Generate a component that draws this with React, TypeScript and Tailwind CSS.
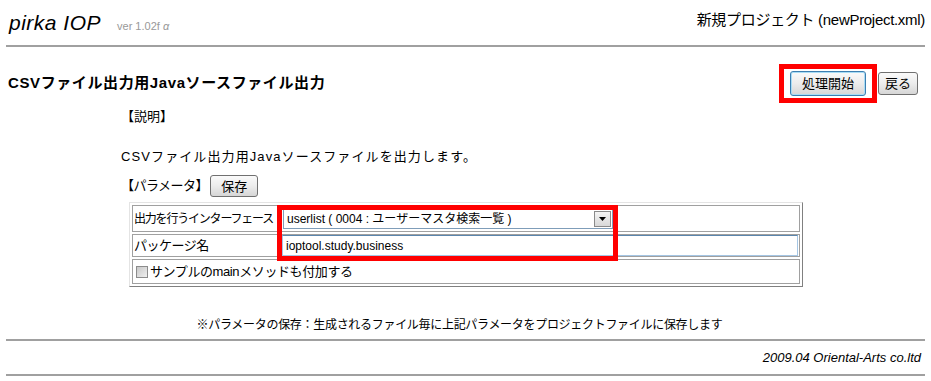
const JP = '"Liberation Sans", "Noto Sans CJK JP", sans-serif';

function XpButton({ children }: { children: React.ReactNode }) {
  return (
    <button className="h-[22px] rounded-[3px] border border-[#707070] px-[10px] text-[13px] leading-none text-black bg-gradient-to-b from-[#fafafa] via-[#ececec] to-[#d6d6d6]">
      {children}
    </button>
  );
}

export default function App() {
  return (
    <div className="w-[931px] h-[381px] bg-white text-black overflow-hidden" style={{ fontFamily: JP }}>
      {/* Header */}
      <header className="mx-[6px] h-[47px] border-b-2 border-[#a0a0a0] flex items-start justify-between">
        <div className="flex items-baseline pl-[3px] pt-[7px]">
          <span className="text-[21px] italic tracking-[0.5px]">pirka IOP</span>
          <span className="ml-[16px] text-[11px] text-[#999]">
            ver 1.02f <span className="italic">α</span>
          </span>
        </div>
        <div className="pt-[9px] text-[15px] tracking-[-0.3px]">新規プロジェクト (newProject.xml)</div>
      </header>

      {/* Title row */}
      <div className="mt-[17px] mx-[8px] flex items-center justify-between">
        <h1 className="text-[15px] font-bold tracking-[0.6px]">CSVファイル出力用Javaソースファイル出力</h1>
        <div className="flex items-center gap-[1px] mr-[5px]">
          <div className="border-[5px] border-[#ff0000] px-[6px] py-[2px]">
            <button className="w-[76px] h-[25px] rounded-[3px] border border-[#3c7fb1] shadow-[inset_0_0_0_1px_#a8dcf5] text-[13px] leading-none bg-gradient-to-b from-[#fafafa] via-[#ececec] to-[#d6d6d6]">
              処理開始
            </button>
          </div>
          <button className="w-[40px] h-[23px] rounded-[3px] border border-[#707070] text-[13px] leading-none bg-gradient-to-b from-[#fafafa] via-[#ececec] to-[#d6d6d6]">
            戻る
          </button>
        </div>
      </div>

      {/* Content */}
      <div className="pl-[121px] mt-[4px] text-[13px]">
        <div className="h-[20px] leading-[20px]">【説明】</div>
        <div className="mt-[20px] h-[20px] leading-[20px] tracking-[1.1px]">CSVファイル出力用Javaソースファイルを出力します。</div>
        <div className="mt-[8px] flex items-center h-[22px]">
          <span className="tracking-[-0.5px]">【パラメータ】</span>
          <span className="ml-[2px]">
            <XpButton>保存</XpButton>
          </span>
        </div>

        {/* Parameter table */}
        <div className="relative ml-[8px] mt-[5px] w-[674px] border border-t-[#e4e4e4] border-l-[#e4e4e4] border-r-[#808080] border-b-[#808080] p-[2px] flex flex-col gap-[2px]">
          <div className="flex gap-[2px] h-[27px]">
            <div className="w-[146px] border border-[#a0a0a0] px-[1px] flex items-center text-[12px] tracking-[-1.2px] whitespace-nowrap">
              出力を行うインターフェース
            </div>
            <div className="flex-1 border border-[#a0a0a0] pl-[2px] flex items-center">
              <div className="w-[330px] h-[20px] border border-[#7f9db9] flex items-center bg-white">
                <span className="flex-1 pl-[3px] text-[12px] whitespace-nowrap">userlist ( 0004 : ユーザーマスタ検索一覧 )</span>
                <span className="w-[17px] h-[16px] mr-[1px] border border-[#8a8a8a] bg-gradient-to-b from-[#f4f4f4] to-[#d8d8d8] flex items-center justify-center">
                  <svg width="7" height="4" viewBox="0 0 7 4">
                    <path d="M0 0h7L3.5 4z" fill="#000" />
                  </svg>
                </span>
              </div>
            </div>
          </div>
          <div className="flex gap-[2px] h-[23px]">
            <div className="w-[146px] border border-[#a0a0a0] px-[1px] flex items-center text-[13px] tracking-[-0.5px]">
              パッケージ名
            </div>
            <div className="flex-1 border border-[#a0a0a0] pl-[1px] pr-[1px] flex items-center">
              <div className="w-full h-[21px] border border-[#a5c6e4] border-t-[#5b86ad] flex items-center pl-[3px] text-[12px]">
                ioptool.study.business
              </div>
            </div>
          </div>
          <div className="h-[25px] border border-[#a0a0a0] flex items-center pl-[3px] text-[13px]">
            <span className="w-[12px] h-[12px] border border-[#8c8c8c] bg-gradient-to-br from-[#c8c8c8] to-[#f0f0f0] mr-[2px]" />
            <span className="tracking-[-0.4px]">サンプルのmainメソッドも付加する</span>
          </div>

          {/* annotation highlight */}
          <div className="absolute left-[147px] top-[2px] w-[341px] h-[56px] border-[5px] border-[#ff0000] pointer-events-none" />
        </div>
      </div>

      {/* Note */}
      <div className="mx-[6px] mt-[29px] text-center text-[12px] tracking-[-0.3px] pr-[12px]">
        ※パラメータの保存：生成されるファイル毎に上記パラメータをプロジェクトファイルに保存します
      </div>

      {/* Footer */}
      <footer className="mx-[6px] mt-[5px] h-[37px] border-t-2 border-b-2 border-[#a0a0a0] flex items-center justify-end pr-[4px]">
        <span className="italic text-[13px]">2009.04 Oriental-Arts co.ltd</span>
      </footer>
    </div>
  );
}
